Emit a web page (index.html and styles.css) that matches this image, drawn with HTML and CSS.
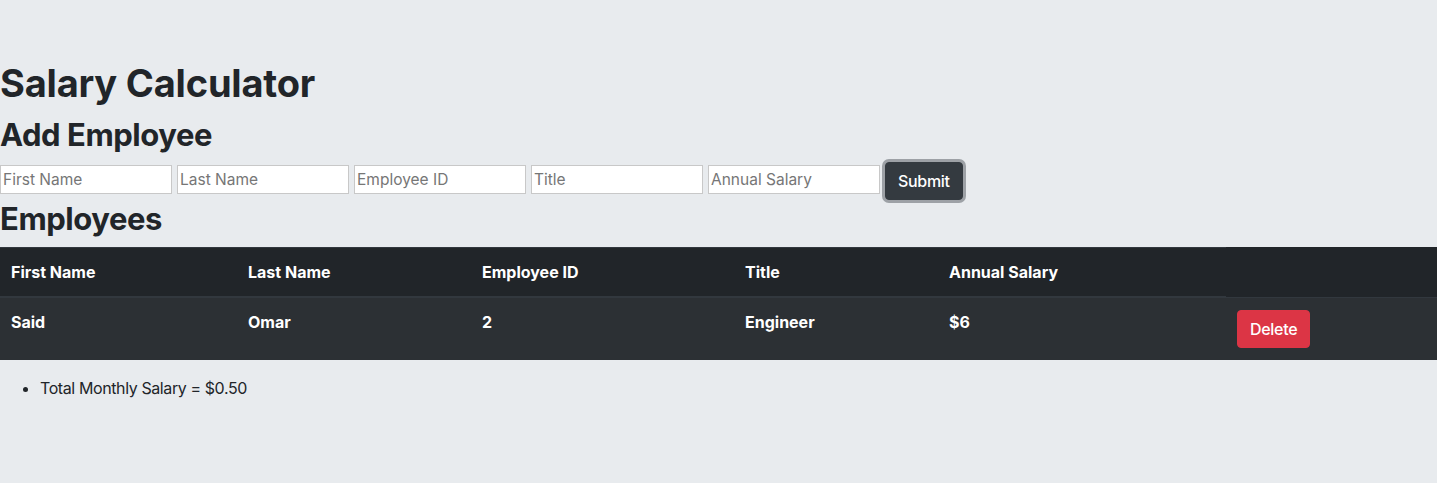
FILE: index.html
```html
<!DOCTYPE html>
<html lang="en">
<head>
<meta charset="utf-8">
<title>Salary Calculator</title>
<link rel="stylesheet" href="styles.css">
</head>
<body>
<main class="app">
  <h1 class="title">Salary Calculator</h1>
  <h2 class="section section-add">Add Employee</h2>
  <form class="add-form">
    <input class="field" type="text" placeholder="First Name">
    <input class="field" type="text" placeholder="Last Name">
    <input class="field" type="text" placeholder="Employee ID">
    <input class="field" type="text" placeholder="Title">
    <input class="field" type="text" placeholder="Annual Salary">
    <button class="btn btn-dark btn-focus" type="button">Submit</button>
  </form>
  <h2 class="section section-list">Employees</h2>
  <table class="emp-table">
    <thead>
      <tr>
        <th class="c1">First Name</th>
        <th class="c2">Last Name</th>
        <th class="c3">Employee ID</th>
        <th class="c4">Title</th>
        <th class="c5">Annual Salary</th>
      </tr>
    </thead>
    <tbody>
      <tr>
        <td>Said</td>
        <td>Omar</td>
        <td>2</td>
        <td>Engineer</td>
        <td>$6</td>
        <td class="action"><button class="btn btn-danger" type="button">Delete</button></td>
      </tr>
    </tbody>
  </table>
  <ul class="totals">
    <li>Total Monthly Salary = $0.50</li>
  </ul>
</main>
</body>
</html>
```

FILE: styles.css
```css
html, body {
  margin: 0;
  padding: 0;
}
body {
  background: #e8ebee;
  color: #212529;
  font-family: "Inter", "Liberation Sans", sans-serif;
  font-size: 16px;
  line-height: 1.5;
}
.app {
  padding-top: 59px;
}
.title {
  font-size: 38px;
  font-weight: 700;
  line-height: 48px;
  margin: 0 0 9px;
  letter-spacing: -0.2px;
}
.section {
  font-size: 31px;
  font-weight: 700;
  line-height: 38px;
  margin: 0;
  letter-spacing: -0.45px;
}
.section-list {
  margin-bottom: 9px;
}
.add-form {
  display: flex;
  align-items: flex-start;
  gap: 5px;
  padding-top: 8px;
}
.field {
  box-sizing: border-box;
  width: 172px;
  height: 29px;
  margin-top: 3px;
  border: 1px solid #c8c8c8;
  background: #fff;
  padding: 1px 2px;
  font-family: inherit;
  font-size: 15.5px;
  color: #212529;
}
.field::placeholder {
  color: #767676;
}
.btn {
  box-sizing: border-box;
  font-family: inherit;
  font-size: 16px;
  line-height: 24px;
  padding: 6px 12px;
  border-radius: 4px;
  border: 1px solid transparent;
  color: #fff;
  cursor: pointer;
  letter-spacing: -0.3px;
}
.btn-dark {
  background: #343a40;
  border-color: #343a40;
  font-weight: 500;
}
.btn-focus {
  box-shadow: 0 0 0 3px rgba(82, 88, 93, 0.5);
}
.btn-danger {
  background: #dc3545;
  border-color: #dc3545;
}
.emp-table {
  width: 100%;
  border-collapse: collapse;
  background: #212529;
  color: #fff;
  margin-bottom: 16px;
  font-weight: 700;
}
.emp-table th,
.emp-table td {
  text-align: left;
  vertical-align: top;
  padding: 12px 11px;
  border-top: 1px solid #32383e;
}
.emp-table th {
  border-bottom: 2px solid #32383e;
}
.emp-table tbody tr {
  background: #2c3034;
}
.emp-table .c1 { width: 215px; }
.emp-table .c2 { width: 212px; }
.emp-table .c3 { width: 241px; }
.emp-table .c4 { width: 182px; }
.emp-table .c5 { width: 266px; }
.emp-table .action {
  padding-left: 11px;
}
.emp-table .action .btn {
  font-weight: 500;
}
.totals {
  margin: 0 0 16px;
  padding-left: 40px;
  letter-spacing: -0.4px;
}
```
